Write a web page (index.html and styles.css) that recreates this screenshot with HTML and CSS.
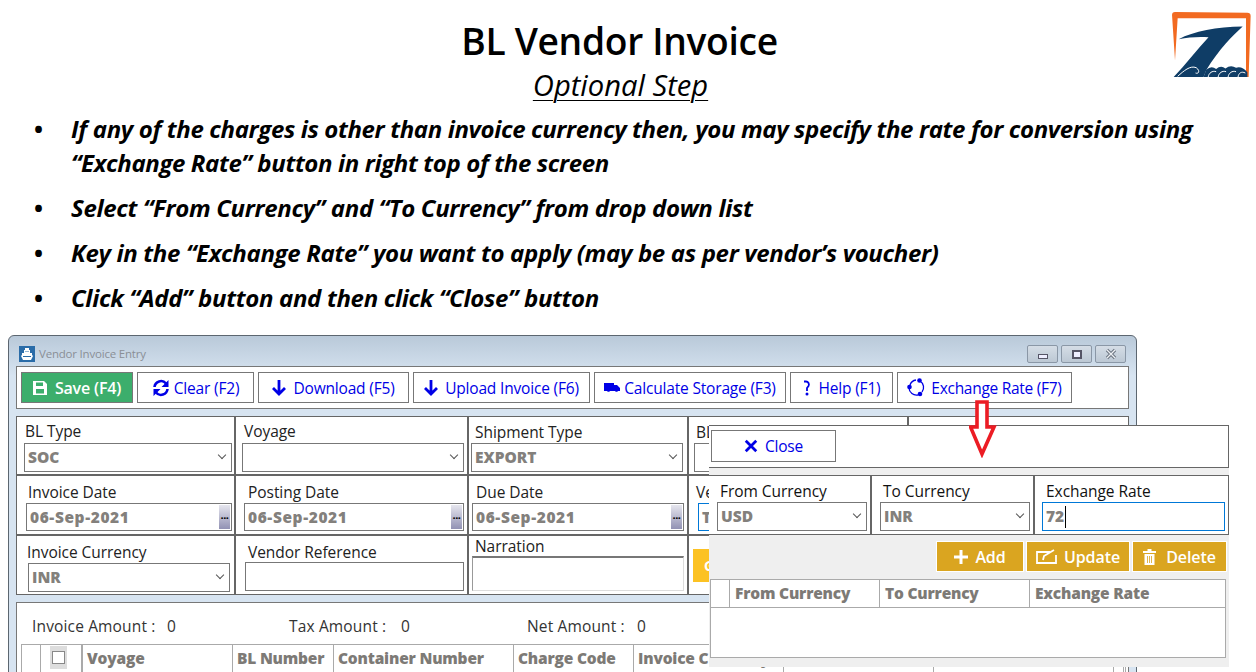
FILE: index.html
```html
<!DOCTYPE html>
<html lang="en">
<head>
<meta charset="utf-8">
<title>BL Vendor Invoice</title>
<link rel="stylesheet" href="styles.css">
</head>
<body>
<div class="slide">
  <header class="head">
    <h1>BL Vendor Invoice</h1>
    <h2>Optional Step</h2>
    <svg class="logo" viewBox="90 30 245 205" width="82" height="68">
      <path d="M95 45 Q95 36 104 36 L322 38 Q332 38 332 48 L326 232 L318 232 L318 55 L112 55 L104 182 Z" fill="#f26a21"/>
      <path d="M115 118 C160 95 230 80 308 80 C280 105 235 150 198 212 L190 232 L100 232 C135 195 170 150 205 112 C175 110 145 112 115 118 Z" fill="#0f3d66"/>
      <path d="M190 232 L198 210 Q214 196 228 208 Q242 196 256 206 Q272 194 288 204 Q306 198 322 218 L322 232 Z" fill="#0f3d66"/>
      <path d="M112 230 C130 214 150 196 168 204 C180 212 176 224 166 220 M204 232 C206 220 216 212 228 216 M234 232 C236 220 246 212 258 216 M264 232 C266 220 276 212 288 216 M294 232 C296 220 304 214 316 220" fill="none" stroke="#fff" stroke-width="3"/>
    </svg>
  </header>
  <ul class="points">
    <li class="two">If any of the charges is other than invoice currency then, you may specify the rate for conversion using “Exchange Rate” button in right top of the screen</li>
    <li>Select “From Currency” and “To Currency” from drop down list</li>
    <li>Key in the “Exchange Rate” you want to apply (may be as per vendor’s voucher)</li>
    <li>Click “Add” button and then click “Close” button</li>
  </ul>

  <section class="window">
    <div class="titlebar">
      <svg class="appicon" viewBox="0 0 16 16" width="16" height="16"><rect width="16" height="16" fill="#2a6ca8"/><path d="M6 2h4v2h1v3h2v2l1 1-2 4H4l-2-4 1-1V7h2V4h1z" fill="#fff"/><path d="M6.500 5h1v1h-1zM8.500 5h1v1h-1zM4 10h8v1H4z" fill="#2a6ca8"/></svg>
      <span class="wintitle">Vendor Invoice Entry</span>
      <div class="winbtns">
        <span class="winbtn"><i class="g-min"></i></span>
        <span class="winbtn"><i class="g-max"></i></span>
        <span class="winbtn"><svg viewBox="0 0 12 12" width="12" height="12"><path d="M2 2l8 8M10 2l-8 8" stroke="#6b7480" stroke-width="3.200"/><path d="M2 2l8 8M10 2l-8 8" stroke="#eef1f4" stroke-width="1.200"/></svg></span>
      </div>
    </div>
    <div class="toolbar">
      <button class="tb save"><svg viewBox="0 0 14 14" width="14" height="14"><path d="M0 0h11l3 3v11H0z" fill="#fff"/><path d="M3 1.500h7v3.500H3zM3 8h8v4.500H3z" fill="#3cae6c"/></svg>Save (F4)</button>
      <button class="tb w-clear"><svg viewBox="0 0 18 18" width="18" height="18"><path d="M2.500 8A6.500 6.500 0 0 1 14 4.500M15.500 10A6.500 6.500 0 0 1 4 13.500" fill="none" stroke="#0000e6" stroke-width="2.600"/><path d="M16.500 1v7h-7zM1.500 17v-7h7z" fill="#0000e6"/></svg>Clear (F2)</button>
      <button class="tb w-down"><svg viewBox="0 0 14 16" width="14" height="16"><path d="M7 0v14M1 8l6 6 6-6" fill="none" stroke="#0000e6" stroke-width="2.800"/></svg>Download (F5)</button>
      <button class="tb w-up"><svg viewBox="0 0 14 16" width="14" height="16"><path d="M7 0v14M1 8l6 6 6-6" fill="none" stroke="#0000e6" stroke-width="2.800"/></svg>Upload Invoice (F6)</button>
      <button class="tb w-calc"><svg viewBox="0 0 16 9" width="16" height="9"><path d="M0 0h10v2h3l3 3v3h-2a2 2 0 0 1-3 0H6a2 2 0 0 1-3 0H0z" fill="#0000e6"/></svg>Calculate Storage (F3)</button>
      <button class="tb w-help"><svg viewBox="0 0 8 16" width="8" height="16"><path d="M1 1.500h2a3 3 0 0 1 2.500 4.500L4 8v3" fill="none" stroke="#0000e6" stroke-width="1.800"/><circle cx="4" cy="14" r="1.500" fill="#0000e6"/></svg>Help (F1)</button>
      <button class="tb w-rate"><svg viewBox="0 0 19 19" width="19" height="19"><path d="M13 3a7.500 7.500 0 0 1 2 11M11 17a7.500 7.500 0 0 1-9-7M3 7a7.500 7.500 0 0 1 6-5" fill="none" stroke="#0000e6" stroke-width="1.300"/><circle cx="12.500" cy="2.500" r="2.300" fill="#0000e6"/><circle cx="13" cy="16" r="2.300" fill="#0000e6"/><circle cx="2.500" cy="9" r="2.300" fill="#0000e6"/></svg>Exchange Rate (F7)</button>
    </div>

    <div class="form">
      <div class="cell a1"><label class="lab">BL Type</label><div class="sel">SOC<i class="chev"></i></div></div>
      <div class="cell a2"><label class="lab">Voyage</label><div class="sel"><i class="chev"></i></div></div>
      <div class="cell a3"><label class="lab">Shipment Type</label><div class="sel">EXPORT<i class="chev"></i></div></div>
      <div class="cell a4"><label class="lab">BL Number</label><div class="sel"></div></div>
      <div class="cell"></div>

      <div class="cell b1"><label class="lab">Invoice Date</label><div class="sel date">06-Sep-2021<i class="dots">...</i></div></div>
      <div class="cell b2"><label class="lab">Posting Date</label><div class="sel date">06-Sep-2021<i class="dots">...</i></div></div>
      <div class="cell b3"><label class="lab">Due Date</label><div class="sel date">06-Sep-2021<i class="dots">...</i></div></div>
      <div class="cell b4"><label class="lab">Vendor</label><div class="sel focus date">T</div></div>
      <div class="cell"></div>

      <div class="cell c1"><label class="lab">Invoice Currency</label><div class="sel">INR<i class="chev"></i></div></div>
      <div class="cell c2"><label class="lab">Vendor Reference</label><div class="sel"></div></div>
      <div class="cell c3"><label class="lab">Narration</label><div class="sel area"></div></div>
      <div class="cell"><div class="gold">Get</div></div>
      <div class="cell"></div>
    </div>

    <div class="grid-panel">
      <div class="totals">
        <span class="t1">Invoice Amount :</span><span class="v1">0</span>
        <span class="t2">Tax Amount :</span><span class="v2">0</span>
        <span class="t3">Net Amount :</span><span class="v3">0</span>
      </div>
      <div class="thead">
        <span class="th th-a"></span>
        <span class="th th-b"><i class="check"></i></span>
        <span class="th th-c">Voyage</span>
        <span class="th th-d">BL Number</span>
        <span class="th th-e">Container Number</span>
        <span class="th th-f">Charge Code</span>
        <span class="th th-g">Invoice Currency</span>
        <span class="th th-h"></span>
        <span class="th th-i"></span>
        <span class="th th-j"></span>
      </div>
    </div>
  </section>

  <section class="popup">
    <div class="pop-bar"><button class="tb close"><svg viewBox="0 0 12 12" width="14" height="14"><path d="M1.500 1.500l9 9M10.500 1.500l-9 9" stroke="#0000e6" stroke-width="2.400"/></svg>Close</button></div>
    <div class="pop-form">
      <div class="pcell p1"><label class="lab">From Currency</label><div class="sel">USD<i class="chev"></i></div></div>
      <div class="pcell p2"><label class="lab">To Currency</label><div class="sel">INR<i class="chev"></i></div></div>
      <div class="pcell p3"><label class="lab">Exchange Rate</label><div class="sel focus">72<i class="caret"></i></div></div>
    </div>
    <div class="pop-actions">
      <button class="act a-add"><svg viewBox="0 0 14 14" width="14" height="14"><path d="M7 0v14M0 7h14" stroke="#fff" stroke-width="3"/></svg>Add</button>
      <button class="act a-upd"><svg viewBox="0 0 22 15" width="22" height="15"><path d="M14 3H1v11h19V6M7 11l1-4 10-6" fill="none" stroke="#fff" stroke-width="1.800"/></svg>Update</button>
      <button class="act a-del"><svg viewBox="0 0 13 16" width="13" height="16"><path d="M0 2h13v2H0zM4.500 0h4v2h-4zM1.500 5h10v11h-10z" fill="#fff"/><path d="M4.500 7v7M6.500 7v7M8.500 7v7" stroke="#daa520" stroke-width=".8"/></svg>Delete</button>
    </div>
    <div class="pop-table">
      <div class="pop-head">
        <span class="ph ph0"></span>
        <span class="ph ph1">From Currency</span>
        <span class="ph ph2">To Currency</span>
        <span class="ph ph3">Exchange Rate</span>
      </div>
    </div>
  </section>

  <svg class="red-arrow" viewBox="0 0 28 58" width="28" height="58">
    <path d="M8 2H18V27H25L13 54 1.500 27H8Z" fill="#fff" stroke="#ec1c24" stroke-width="3.600"/>
  </svg>
</div>
</body>
</html>
```
FILE: styles.css
```css
* { box-sizing: border-box; }
html, body { margin: 0; padding: 0; }
body { background: #fff; font-family: "Open Sans", "Noto Sans", sans-serif; overflow: hidden; }
.slide { position: relative; width: 1256px; height: 672px; overflow: hidden; background: #fff; }

.head { height: 106px; padding-top: 15px; text-align: center; }
.head h1 { margin: 0; padding-right: 17px; font-size: 37.200px; line-height: 52px; font-weight: 600; color: #000; letter-spacing: -.32px; }
.head h2 { margin: 0; padding-right: 15px; font-size: 29.200px; line-height: 36px; font-weight: 400; font-style: italic; text-decoration: underline; text-decoration-thickness: 1px; text-underline-offset: 4px; color: #000; }
.logo { position: absolute; left: 1170px; top: 10px; }

.points { margin: 0; padding: 0 0 0 71px; list-style: none; }
.points li { position: relative; width: 1140px; height: 45px; font-size: 24px; line-height: 34px; font-weight: 700; font-style: italic; color: #000; letter-spacing: -.33px; padding-top: 6px; }
.points li.two { height: 79px; letter-spacing: -.37px; }
.points li::before { content: "•"; position: absolute; left: -37px; font-style: normal; font-weight: 700; }

.window { position: absolute; left: 8px; top: 335px; width: 1129px; height: 400px; border: 1px solid #5c6670; border-radius: 6px 6px 0 0; background: linear-gradient(#b9c9d9, #d7e4f1 40px); padding: 0 7px; }
.titlebar { display: flex; align-items: flex-start; height: 30px; padding-left: 3px; }
.appicon { margin-top: 10px; }
.wintitle { margin: 10px 0 0 4px; font-size: 11.500px; line-height: 16px; color: #8a8f96; letter-spacing: -.2px; }
.winbtns { margin: 9px 0 0 auto; display: flex; gap: 3px; padding-right: 3px; }
.winbtn { display: flex; align-items: center; justify-content: center; width: 31px; height: 18px; border: 1px solid #8a97a6; border-radius: 2px; background: linear-gradient(#d5dde6, #bcc8d4); }
.g-min { width: 10px; height: 5px; border: 1px solid #556; background: #eef; margin-top: 4px; }
.g-max { width: 10px; height: 9px; border: 2px solid #556; background: #eef; }

.toolbar { display: flex; gap: 4px; height: 43px; padding: 5px 0 0 4px; background: #fff; border: 1px solid #777; }
.tb { display: inline-flex; align-items: center; justify-content: center; flex: none; white-space: nowrap; gap: 4px; height: 31px; padding: 0; background: #fff; border: 1px solid #777; color: #0000e6; font-family: "Open Sans", sans-serif; font-size: 15.500px; letter-spacing: -.18px; }
.save { width: 112px; background: #3cae6c; color: #fff; font-weight: 600; font-size: 16px; gap: 8px; }
.w-clear { width: 117px; } .w-down { width: 151px; gap: 7px; } .w-up { width: 177px; gap: 7px; }
.w-calc { width: 192px; } .w-help { width: 103px; gap: 8px; } .w-rate { width: 175px; gap: 5px; letter-spacing: -.28px; }

.form { display: grid; grid-template-columns: 217px 231px 218px 218px 1fr; grid-template-rows: 57px 58px 58px; gap: 2px; margin-top: 7px; background: #666; border: 1px solid #666; }
.cell { background: #fff; position: relative; padding: 0; min-width: 0; }
.lab { display: block; font-size: 15.500px; font-weight: 500; line-height: 21px; color: #222; letter-spacing: -.05px; white-space: nowrap; }
.sel { position: relative; height: 29px; border: 1px solid #777; background: #fff; color: #83807c; font-size: 15.500px; font-weight: 800; line-height: 27px; padding-left: 3px; white-space: nowrap; overflow: hidden; }
.chev { position: absolute; right: 6px; top: 8px; width: 6px; height: 6px; border-right: 1px solid #555; border-bottom: 1px solid #555; transform: rotate(45deg); }

.a1 { padding: 4px 2px 0 7px; } .a1 .lab { padding-left: 1px; margin-bottom: 1px; }
.a2 { padding: 4px 3px 0 6px; } .a2 .lab { padding-left: 2px; margin-bottom: 1px; }
.a3 { padding: 5px 4px 0 2px; } .a3 .lab { padding-left: 4px; }
.a4 { padding: 5px 4px 0 5px; } .a4 .lab { padding-left: 2px; }
.b1 { padding: 6px 2px 0 9px; } .b1 .lab { padding-left: 2px; }
.b2 { padding: 6px 3px 0 8px; } .b2 .lab { padding-left: 4px; }
.b3 { padding: 6px 3px 0 3px; } .b3 .lab { padding-left: 4px; }
.b4 { padding: 6px 4px 0 9px; } .b4 .lab { margin-left: -2px; }
.c1 { padding: 6px 4px 0 11px; } .c1 .lab { margin-left: -1px; }
.c2 { padding: 6px 3px 0 9px; } .c2 .lab { padding-left: 3px; margin-bottom: -1px; }
.c3 { padding: 0 3px 0 3px; } .c3 .lab { padding-left: 3px; margin-bottom: -1px; }

.date { height: 28px; letter-spacing: .6px; line-height: 26px; }
.dots { position: absolute; right: 1px; top: 1px; bottom: 1px; width: 11px; background: linear-gradient(#e6e6ee, #9292b4); color: #000; font-style: normal; font-size: 11px; font-weight: 700; line-height: 20px; text-align: center; letter-spacing: -.5px; }
.focus { border-color: #0078d7; }
.area { height: 35px; border-color: #ddd; border-top: 2px solid #777; border-left: 1px solid #999; }
.gold { position: absolute; left: 4px; top: 13px; width: 20px; height: 33px; background: #fcc223; color: #fff; font-weight: 700; font-size: 14px; line-height: 33px; padding-left: 11px; overflow: hidden; white-space: nowrap; }

.grid-panel { margin-top: 7px; background: #fff; height: 300px; border: 1px solid #777; padding: 0 4px; }
.totals { position: relative; height: 41px; font-size: 15.500px; color: #333; letter-spacing: .15px; }
.totals span { position: absolute; top: 13px; line-height: 20px; white-space: nowrap; }
.t1 { left: 11px; } .v1 { left: 146px; } .t2 { left: 268px; } .v2 { left: 380px; } .t3 { left: 506px; } .v3 { left: 616px; }
.thead { display: flex; height: 29px; border: 1px solid #aaa; color: #7d7a76; font-size: 15.500px; font-weight: 800; line-height: 27px; letter-spacing: -.2px; }
.th { flex: none; padding-left: 4px; border-right: 1px solid #aaa; overflow: hidden; white-space: nowrap; }
.th-a { width: 19px; } .th-b { width: 42px; border-right-width: 2px; padding: 6px 0 0 11px; }
.th-c { width: 150px; } .th-d { width: 101px; } .th-e { width: 180px; } .th-f { width: 120px; } .th-g { width: 150px; } .th-h { width: 150px; } .th-i { width: 180px; } .th-j { width: 12px; }
.check { display: block; width: 13px; height: 13px; border: 1px solid #888; background: #fff; box-shadow: 0 -3px 0 2px #ddd, 0 3px 0 2px #ddd; }

.popup { position: absolute; left: 709px; top: 425px; width: 520px; height: 242px; background: #efefef; }
.pop-bar { height: 43px; background: #fff; border: 1px solid #666; border-left: 0; padding: 4px 0 0 2px; }
.close { width: 125px; height: 32px; gap: 7px; }
.pop-form { display: flex; margin-top: 7px; height: 60px; background: #666; gap: 2px; padding: 1px 1px 1px 0; }
.pcell { background: #fff; padding: 0 3px 0 8px; height: 58px; }
.pcell .lab { padding: 5px 0 0 3px; color: #111; line-height: 21px; }
.p1, .p2 { width: 161px; } .p3 { flex: 1; padding: 0 3px 0 7px; } .p3 .lab { padding-left: 4px; } .p3 .sel { padding-left: 3px; }
.pop-actions { display: flex; justify-content: flex-end; gap: 2px; padding: 6px 2px 0 0; height: 44px; }
.act { display: inline-flex; align-items: center; justify-content: center; flex: none; height: 31px; gap: 7px; padding: 0; border: 1px solid #fff; background: #daa520; color: #fff; font-family: "Open Sans", sans-serif; font-size: 16px; font-weight: 600; letter-spacing: -.1px; }
.a-add { width: 88px; } .a-upd { width: 104px; gap: 6px; } .a-del { width: 95px; gap: 10px; }
.pop-table { margin: 0 3px 0 1px; height: 79px; background: #fff; border: 1px solid #aaa; }
.pop-head { display: flex; height: 28px; border-bottom: 1px solid #aaa; color: #7d7a76; font-size: 15.500px; font-weight: 800; line-height: 27px; letter-spacing: -.2px; }
.ph { padding-left: 5px; border-right: 1px solid #aaa; flex: none; white-space: nowrap; }
.ph0 { width: 19px; } .ph1 { width: 150px; } .ph2 { width: 150px; } .ph3 { border-right: 0; flex: 1; }
.caret { display: inline-block; width: 1px; height: 22px; background: #000; vertical-align: -6px; margin-left: 1px; }

.red-arrow { position: absolute; left: 969px; top: 400px; }
```
